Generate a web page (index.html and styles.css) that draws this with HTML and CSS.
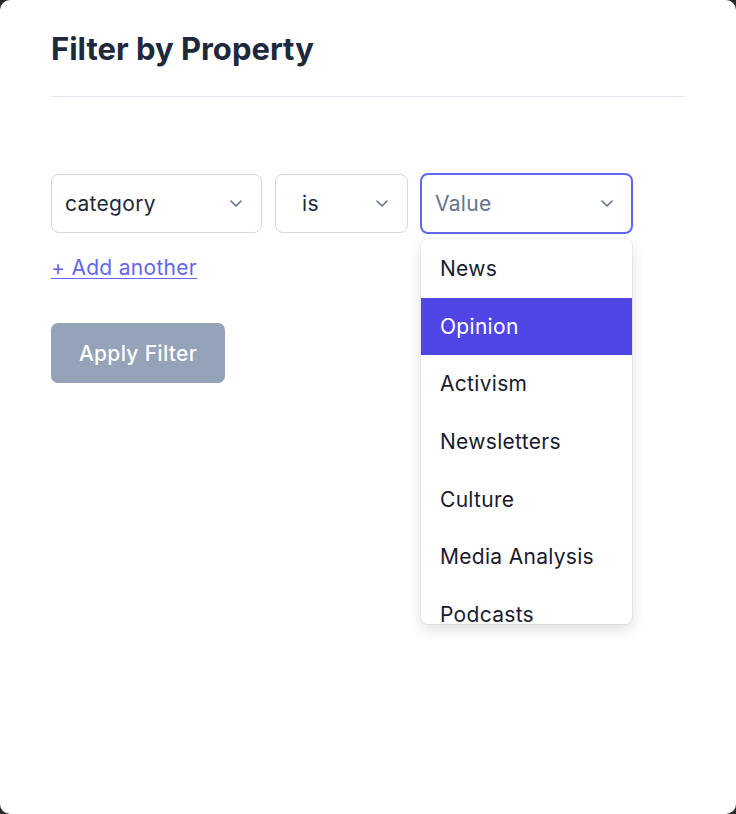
FILE: index.html
```html
<!DOCTYPE html>
<html>
<head>
<meta charset="utf-8">
<link rel="stylesheet" href="styles.css">
</head>
<body>
<div class="modal">
  <h1 class="title">Filter by Property</h1>
  <div class="divider"></div>
  <div class="row">
    <div class="select sel-prop">
      <span class="sel-text">category</span>
      <svg class="chev" viewBox="0 0 12 7" width="12" height="7"><path d="M1 1l5 5 5-5" fill="none" stroke="#64748b" stroke-width="1.6" stroke-linecap="round" stroke-linejoin="round"/></svg>
    </div>
    <div class="select sel-op">
      <span class="sel-text">is</span>
      <svg class="chev" viewBox="0 0 12 7" width="12" height="7"><path d="M1 1l5 5 5-5" fill="none" stroke="#64748b" stroke-width="1.6" stroke-linecap="round" stroke-linejoin="round"/></svg>
    </div>
    <div class="value-wrap">
      <div class="select sel-val">
        <span class="sel-text placeholder">Value</span>
        <svg class="chev" viewBox="0 0 12 7" width="12" height="7"><path d="M1 1l5 5 5-5" fill="none" stroke="#64748b" stroke-width="1.6" stroke-linecap="round" stroke-linejoin="round"/></svg>
      </div>
      <ul class="menu">
        <li class="item">News</li>
        <li class="item active">Opinion</li>
        <li class="item">Activism</li>
        <li class="item">Newsletters</li>
        <li class="item">Culture</li>
        <li class="item">Media Analysis</li>
        <li class="item">Podcasts</li>
      </ul>
    </div>
  </div>
  <a class="add" href="#">+ Add another</a>
  <div class="actions">
    <button class="apply">Apply Filter</button>
  </div>
</div>
</body>
</html>
```
FILE: styles.css
```css
html, body {
  margin: 0;
  padding: 0;
  background: #2a2a2a;
}
body {
  font-family: Inter, "Noto Sans", "Liberation Sans", sans-serif;
  width: 736px;
  height: 814px;
  overflow: hidden;
}
.modal {
  box-sizing: border-box;
  width: 736px;
  height: 814px;
  background: #ffffff;
  border-radius: 10px;
  padding: 31px 51px 0 51px;
}
.title {
  margin: 0;
  font-size: 31px;
  line-height: 36px;
  font-weight: 700;
  color: #1e293b;
}
.divider {
  height: 1px;
  background: #e2e8f0;
  margin-top: 29px;
  width: 634px;
}
.row {
  display: flex;
  gap: 13px;
  margin-top: 77px;
  align-items: flex-start;
}
.select {
  box-sizing: border-box;
  height: 59px;
  border: 1px solid #d4d8de;
  border-radius: 8px;
  background: #fff;
  display: flex;
  align-items: center;
  justify-content: space-between;
  padding: 0 19px 0 13px;
  font-size: 21px;
  letter-spacing: 0.3px;
  color: #1e293b;
}
.sel-prop { width: 211px; }
.sel-op { width: 133px; padding-left: 26px; }
.value-wrap {
  position: relative;
  width: 213px;
  margin-left: -1px;
}
.sel-val {
  width: 213px;
  height: 61px;
  margin-top: -1px;
  border: 2px solid #6366f1;
  padding-left: 13px;
  padding-right: 18px;
}
.placeholder { color: #64748b; }
.chev { display: block; }
.menu {
  position: absolute;
  top: 65px;
  left: 1px;
  width: 211px;
  height: 385px;
  margin: 0;
  padding: 1px 0 0 0;
  list-style: none;
  background: #fff;
  border-radius: 7px;
  box-shadow: 0 6px 14px rgba(15, 23, 42, 0.13), 0 0 0 1px rgba(15, 23, 42, 0.05);
  overflow: hidden;
  box-sizing: border-box;
}
.item {
  height: 57.6px;
  display: flex;
  align-items: center;
  padding-left: 19px;
  font-size: 21px;
  letter-spacing: 0.3px;
  color: #1a1a2e;
}
.item.active {
  background: #4f46e5;
  color: #fff;
}
.add {
  display: inline-block;
  margin-top: 21px;
  font-size: 21px;
  letter-spacing: 0.3px;
  line-height: 26px;
  color: #6366f1;
  text-decoration: underline;
  text-underline-offset: 3px;
  text-decoration-thickness: 1px;
}
.actions {
  margin-top: 42px;
}
.apply {
  width: 174px;
  height: 60px;
  border: none;
  border-radius: 7px;
  background: #94a3b8;
  color: #fff;
  font-family: inherit;
  font-size: 21px;
  letter-spacing: 0.3px;
  font-weight: 500;
}
```
